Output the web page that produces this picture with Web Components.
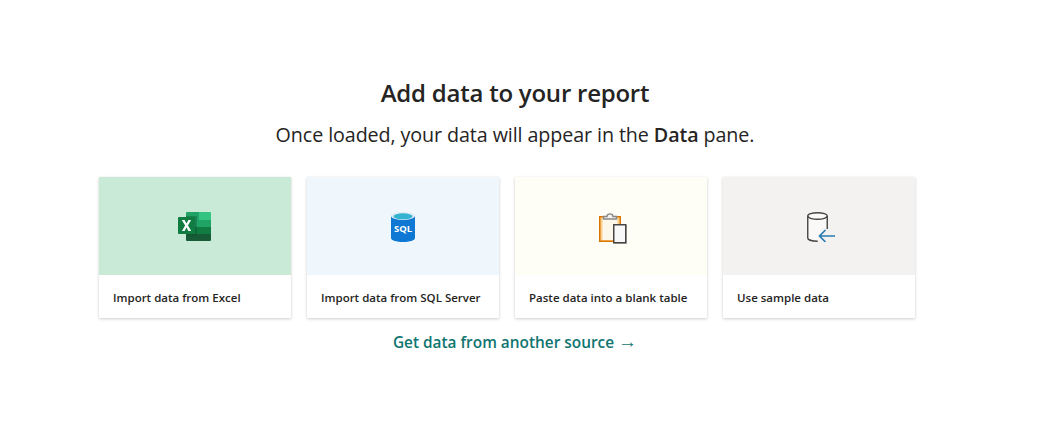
<!DOCTYPE html>
<html><head><meta charset="utf-8"><title>Add data</title>
<style>
html,body{margin:0;padding:0;background:#fff;}
body{width:1030px;height:446px;overflow:hidden;font-family:"Open Sans","Noto Sans",sans-serif;color:#252423;}
</style></head>
<body>
<template id="tpl-page">
<style>
:host{display:flex;flex-direction:column;align-items:center;padding-top:76px;}
h1{margin:0;font-size:24px;line-height:34px;font-weight:600;color:#252423;letter-spacing:-.23px;}
p{margin:9px 0 0;font-size:19.7px;line-height:32px;color:#252423;letter-spacing:-.09px;}
.cards{display:flex;margin-top:26px;}
</style>
<h1><slot name="title"></slot></h1>
<p><slot name="sub"></slot></p>
<div class="cards"><slot></slot></div>
<slot name="link"></slot>
</template>
<template id="tpl-card">
<style>
:host{display:block;width:192px;height:141px;margin-right:16px;background:#fff;box-shadow:0 1px 3px rgba(0,0,0,.2);font-size:11.5px;font-weight:600;color:#252423;}
.img{height:98px;display:flex;align-items:center;justify-content:center;background:var(--bg);}
.lbl{height:41px;padding-top:2px;display:flex;align-items:center;padding-left:14px;white-space:nowrap;}
</style>
<div class="img"><slot name="icon"></slot></div>
<div class="lbl"><slot></slot></div>
</template>
<template id="tpl-link">
<style>
:host{display:block;margin-top:14px;font-size:15.4px;line-height:22px;font-weight:600;color:#107570;white-space:nowrap;}
.a{font-family:"Liberation Sans",sans-serif;font-weight:400;font-size:19px;line-height:0;}
</style>
<slot></slot> <span class="a">→</span>
</template>

<report-page>
<span slot="title">Add data to your report</span>
<span slot="sub">Once loaded, your data will appear in the <b style="font-weight:600">Data</b> pane.</span>

<source-card style="--bg:#caead8"><svg slot="icon" width="34" height="30" viewBox="0 0 34 30" style="display:block;margin-top:2px">
<path d="M8 1a1 1 0 0 1 1-1h12v8H8z" fill="#21a366"/><path d="M21 0h11a1 1 0 0 1 1 1v7H21z" fill="#33c481"/>
<rect x="8" y="8" width="25" height="7" fill="#21a366"/>
<rect x="8" y="15" width="25" height="7" fill="#107c41"/>
<path d="M8 22h25v6a1 1 0 0 1-1 1H9a1 1 0 0 1-1-1z" fill="#185c37"/>
<rect x="8" y="4" width="11" height="20" fill="#0b4a2a" opacity=".35"/>
<rect x="0" y="5" width="17" height="17" rx="1" fill="#107c41"/>
<path d="M3.800 8h2.800l1.900 3.400L10.400 8h2.700l-3.100 5.500 3.200 5.500h-2.800l-1.900-3.500L6.600 19H3.900l3.200-5.500z" fill="#fff"/></svg>Import data from Excel</source-card>

<source-card style="--bg:#eff6fc"><svg slot="icon" width="24" height="30" viewBox="0 0 24 30" style="display:block;margin-top:2px">
<path d="M0 4v22c0 2.400 5.400 4 12 4s12-1.600 12-4V4z" fill="#0f78d4"/>
<ellipse cx="12" cy="4" rx="12" ry="4" fill="#dfeaf4"/>
<ellipse cx="12" cy="4.300" rx="9.500" ry="3" fill="#32b4d0"/>
<text x="12" y="19.500" text-anchor="middle" font-family="'Open Sans',sans-serif" font-size="9.500" font-weight="700" fill="#fff">SQL</text></svg>Import data from SQL Server</source-card>

<source-card style="--bg:#fefdf6"><svg slot="icon" width="28" height="32" viewBox="0 0 28 32" style="display:block;margin:3px 0 0 4px">
<rect x=".75" y="4.750" width="20.500" height="24.500" fill="#fbd08f" stroke="#db7500" stroke-width="1.500"/>
<rect x="3.500" y="6" width="15" height="22" fill="#fdf6ea"/>
<path d="M4.500 7V4.500h3.500c.2-3.500 5.800-3.500 6 0h3.500V7z" fill="#f3f2f1" stroke="#8a8886" stroke-width="1.400"/>
<rect x="15" y="13" width="13" height="19" fill="#c8c6c4"/>
<rect x="14.750" y="12.750" width="12" height="18" fill="#f8f8f8" stroke="#484644" stroke-width="1.500"/></svg>Paste data into a blank table</source-card>

<source-card style="--bg:#f3f2f1"><svg slot="icon" width="28" height="30" viewBox="0 0 28 30" style="display:block;margin:2px 0 0 4px">
<path d="M.75 4c0-1.800 4.500-3.300 9.750-3.300S20.250 2.200 20.250 4v12H15l-3 13h-1.500C5 29 .75 27.800.75 26z" fill="#faf9f8"/>
<path d="M20.250 17V4c0-1.800-4.500-3.300-9.750-3.300S.75 2.200.75 4v22c0 1.800 4.200 3.200 10 3.200" fill="none" stroke="#484644" stroke-width="1.400"/>
<path d="M.75 4c0 1.800 4.500 3.300 9.750 3.300S20.250 5.800 20.250 4" fill="none" stroke="#484644" stroke-width="1.400"/>
<path d="M28 24H13.500M18.500 18 12.500 24l6 6" fill="none" stroke="#2b7cb3" stroke-width="1.700"/></svg>Use sample data</source-card>

<more-link slot="link">Get data from another source</more-link>
</report-page>

<script>
function def(name,tpl){customElements.define(name,class extends HTMLElement{constructor(){super();this.attachShadow({mode:'open'}).appendChild(document.getElementById(tpl).content.cloneNode(true));}});}
def('report-page','tpl-page');def('source-card','tpl-card');def('more-link','tpl-link');
</script>
</body></html>
